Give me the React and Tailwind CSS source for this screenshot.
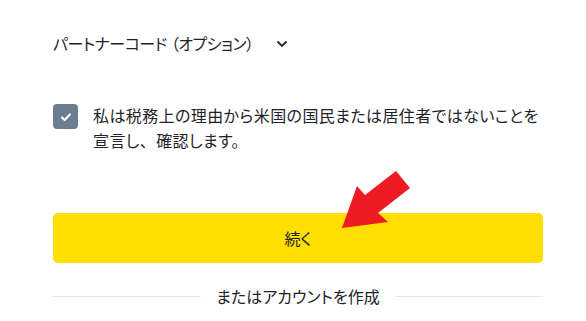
const Check = () => (
  <svg className="w-[14px] h-[14px]" viewBox="0 0 16 16" fill="none">
    <path d="M3.5 8.5l3 3 6-6.5" stroke="white" strokeWidth={2.4} strokeLinecap="round" strokeLinejoin="round" />
  </svg>
)

const Chevron = () => (
  <svg className="w-[12px] h-[10px]" viewBox="0 0 12 10" fill="none">
    <path d="M1.5 2.5l4.5 4.5 4.5-4.5" stroke="#1e2329" strokeWidth={1.8} />
  </svg>
)

export default function App() {
  return (
    <div
      className="relative w-[586px] h-[321px] bg-white overflow-hidden text-[#1e2329] [font-feature-settings:'palt']"
      style={{ fontFamily: "'Noto Sans CJK JP', 'Noto Sans', sans-serif" }}
    >
      <div className="pl-[53px] w-[543px]">
        <div className="pt-[31px] flex items-center h-[55px]">
          <span className="text-[16px] leading-[24px] tracking-[-0.5px]">
            パートナーコード<span className="ml-[4px]">（</span>オプション）
          </span>
          <span className="ml-[22px] mt-[1px]"><Chevron /></span>
        </div>

        <div className="mt-[48px] flex items-start gap-[15px]">
          <div className="mt-[1px] w-[25px] h-[25px] shrink-0 rounded-[4px] bg-[#6b7d91] flex items-center justify-center">
            <Check />
          </div>
          <p className="text-[16px] leading-[25px] tracking-[0.4px]">
            私は税務上の理由から米国の国民または居住者ではないことを
            <br />
            宣言し<span className="[font-feature-settings:normal]">、</span>確認します。
          </p>
        </div>

        <button className="mt-[60px] w-full h-[50px] rounded-[5px] bg-[#ffde00] text-[16px] text-[#1e2329] flex items-center justify-center">
          続く
        </button>

        <div className="mt-[21px] flex items-center gap-[15px]">
          <div className="flex-1 h-px bg-[#e6e8ea]" />
          <span className="text-[16px] leading-[24px] text-[#1e2329]">またはアカウントを作成</span>
          <div className="flex-1 h-px bg-[#e6e8ea]" />
        </div>
      </div>

      <svg className="absolute left-0 top-0 pointer-events-none" width="586" height="321" viewBox="0 0 586 321">
        <polygon
          points="342,228 388,222 378,213 410,188 396,171 365,195 357,186"
          fill="#ed1c24"
        />
      </svg>
    </div>
  )
}
